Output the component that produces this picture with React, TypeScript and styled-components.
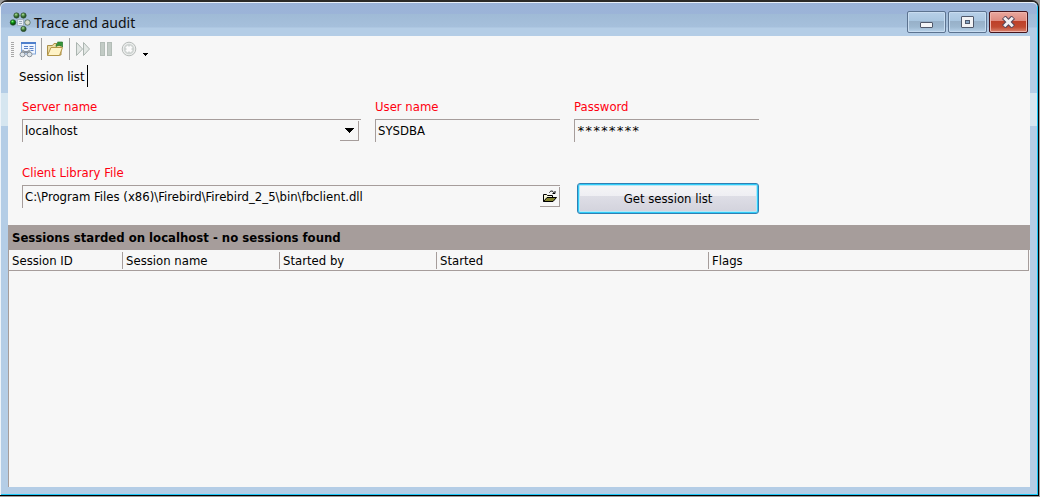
import React from "react";
import styled, { createGlobalStyle } from "styled-components";

const FONT = '"DejaVu Sans Condensed", "Noto Sans", sans-serif';
const FACE = "#f7f7f7";
const FRAME = "#b4cde6";
const LINE = "#a69d9b";

const GlobalStyle = createGlobalStyle`
  * { box-sizing: border-box; }
  body {
    margin: 0;
    background: #9c9c9c;
    font-family: ${FONT};
    font-size: 13px;
    line-height: 16px;
    color: #000;
  }
  button, input, select { font: inherit; color: inherit; }
`;

const Desktop = styled.div`
  min-height: 100vh;
  display: flex;
  padding: 0 1px 1px 0;
`;

const Window = styled.div`
  flex: 1;
  display: flex;
  flex-direction: column;
  border-style: solid;
  border-width: 2px 1px 1px 0;
  border-color: #2b2928 #000 #000 #000;
  border-radius: 7px 7px 0 0;
  background: ${FRAME};
  box-shadow: inset 1px 1px 0 #eef4fa, inset -1px -1px 0 #1cc8f8;
`;

const TitleBar = styled.header`
  display: flex;
  align-items: center;
  height: 34px;
  padding: 5px 9px 0 8px;
  margin: 0 1px 0 1px;
  border-top: 1px solid #e9eff8;
  border-radius: 5px 5px 0 0;
  background: linear-gradient(
    #9ab2d8 0, #9cb4d8 11px, #9fbad6 11px, #a6c0dc 24px, ${FRAME} 25px
  );
`;

const Title = styled.h1`
  flex: 1;
  margin: 0 0 0 3px;
  padding-top: 2px;
  font-family: "Noto Sans", sans-serif;
  font-size: 14px;
  font-weight: 400;
  line-height: 20px;
  color: #111;
`;

const CaptionButtons = styled.div`
  display: flex;
  gap: 2px;
`;

const CaptionButton = styled.button<{ $close?: boolean }>`
  display: grid;
  place-items: center;
  width: 39px;
  height: 22px;
  padding: 0;
  border: 1px solid ${(p) => (p.$close ? "#45141c" : "#5c7390")};
  border-radius: 2px;
  background: ${(p) =>
    p.$close
      ? "linear-gradient(#e9a79e, #de8a7e 45%, #bd3f28 45%, #c14a31 75%, #dc8773)"
      : "linear-gradient(#b8d0e8, #a9c6e0 45%, #97b0c8 45%, #9db8d0 75%, #b8d2ea)"};
  box-shadow: inset 0 0 0 1px ${(p) => (p.$close ? "#eeb5ac" : "#c8dcf0")};
`;

const Body = styled.main`
  flex: 1;
  display: flex;
  flex-direction: column;
  margin: 0 1px 0 1px;
  padding: 0 7px 8px;
  background: linear-gradient(
    transparent 57px, #d6e6f0 57px, #d6e6f0 90px, transparent 90px
  );
`;

const Client = styled.div`
  flex: 1;
  display: flex;
  flex-direction: column;
  background: ${FACE};
`;

const Toolbar = styled.div`
  display: flex;
  align-items: center;
  height: 26px;
  padding-left: 3px;
`;

const Grip = styled.span`
  width: 3px;
  height: 15px;
  margin-right: 2px;
  background: repeating-linear-gradient(#a8a8a8 0 1px, ${FACE} 1px 2px);
`;

const ToolButton = styled.button`
  display: grid;
  place-items: center;
  width: 23px;
  height: 22px;
  padding: 0 1px 0 0;
  border: 0;
  background: none;
`;

const MenuButton = styled(ToolButton)`
  width: 10px;
  align-items: end;
  padding-bottom: 4px;
`;

const Separator = styled.span`
  width: 1px;
  height: 22px;
  margin: 0 2px;
  background: #a0a0a0;
`;

const Tabs = styled.div`
  display: flex;
  padding: 3px 0 0 11px;
`;

const Tab = styled.button`
  height: 22px;
  padding: 1px 2px 0 0;
  border: 0;
  border-right: 1px solid #000;
  background: none;
`;

const Form = styled.form`
  display: grid;
  grid-template-columns: 339px 185px 185px;
  column-gap: 14px;
  row-gap: 23px;
  padding: 12px 14px 11px;
`;

const Field = styled.div<{ $span?: number }>`
  grid-column: span ${(p) => p.$span ?? 1};
  display: flex;
  flex-direction: column;
  gap: 4px;
`;

const Label = styled.label`
  color: #ff0010;
`;

const Control = styled.div`
  display: flex;
  height: 23px;
  position: relative;
  border-top: 1px solid ${LINE};
  border-left: 1px solid ${LINE};
`;

const Input = styled.input`
  flex: 1;
  min-width: 0;
  padding: 0 2px;
  border: 0;
  outline: 0;
  background: none;
`;

const MaskedInput = styled(Input)`
  font-family: "DejaVu Sans Mono", monospace;
`;

const Select = styled.select`
  flex: 1;
  appearance: none;
  padding: 0 2px;
  border: 0;
  outline: 0;
  background: none;
`;

const DropMark = styled.span`
  position: absolute;
  top: 1px;
  right: 2px;
  display: grid;
  place-items: center;
  width: 19px;
  height: 20px;
  border-right: 1px solid ${LINE};
  border-bottom: 1px solid ${LINE};
  pointer-events: none;
`;

const BrowseButton = styled.button`
  display: grid;
  place-items: center;
  width: 20px;
  height: 20px;
  margin-top: 1px;
  padding: 0;
  border: 0;
  border-right: 1px solid ${LINE};
  border-bottom: 1px solid ${LINE};
  background: none;
`;

const SubmitButton = styled.button`
  height: 31px;
  margin: 18px 0 0 3px;
  border: 1px solid #3080b4;
  border-radius: 3px;
  background: linear-gradient(#f6f6f7 0, #efeff3 40%, #dedee6 41%, #d2d2dc 100%);
  box-shadow: inset 0 0 0 1px #30ccf8, inset 0 0 0 2px #b4e8f8;
`;

const Band = styled.h2`
  margin: 0;
  padding: 5px 4px 4px;
  background: ${LINE};
  font-size: 13px;
  font-weight: 700;
  line-height: 16px;
`;

const List = styled.section`
  flex: 1;
  margin-right: 1px;
  border-left: 1px solid ${LINE};
`;

const Table = styled.table`
  width: 100%;
  table-layout: fixed;
  border-collapse: separate;
  border-spacing: 0;
  border-right: 1px solid ${LINE};
`;

const HeadCell = styled.th<{ $width?: number }>`
  width: ${(p) => (p.$width ? `${p.$width}px` : "auto")};
  height: 21px;
  padding: 3px 3px 1px;
  border-bottom: 1px solid ${LINE};
  background: ${(p) =>
    p.$width ? `linear-gradient(${LINE}, ${LINE}) right 2px / 1px 17px no-repeat` : "none"};
  font-weight: 400;
  line-height: 16px;
  text-align: left;
`;

const AppIcon = () => (
  <svg width="22" height="20" viewBox="0 0 22 20">
    <defs>
      <radialGradient id="leaf" cx="40%" cy="30%">
        <stop offset="0" stopColor="#b8e0a8" />
        <stop offset="0.5" stopColor="#5c9c50" />
        <stop offset="1" stopColor="#2c5a2a" />
      </radialGradient>
      <radialGradient id="bright" cx="40%" cy="30%">
        <stop offset="0" stopColor="#90f080" />
        <stop offset="0.5" stopColor="#10a018" />
        <stop offset="1" stopColor="#045008" />
      </radialGradient>
    </defs>
    <g stroke="#2c4a30" strokeWidth="0.6">
      <circle cx="7.500" cy="3.5" r="2.7" fill="url(#leaf)" />
      <circle cx="14.500" cy="3.5" r="2.7" fill="url(#leaf)" />
      <circle cx="4" cy="10.5" r="2.8" fill="url(#bright)" />
      <circle cx="18.500" cy="10.5" r="2.7" fill="#d6dccb" />
      <circle cx="14.500" cy="17" r="2.7" fill="url(#leaf)" />
    </g>
    <rect x="8.500" y="7.500" width="6" height="6" fill="#e6edf5" stroke="#a3b2c2" />
    <path d="M10 9.500h3M10 11.500h3" stroke="#9aa9b8" />
  </svg>
);

const SessionsIcon = () => (
  <svg width="17" height="17" viewBox="0 0 17 17">
    <rect x="2.500" y="2" width="14" height="11" fill="#f0f6ff" stroke="#82a8dc" />
    <path d="M2 2h15" stroke="#4f80cc" strokeWidth="2" />
    <path d="M5 5.500h4M10.500 5.500h4M5 7.500h4M10.500 7.500h4M11.500 9.500h3" stroke="#5c82c6" />
    <path d="M4.500 9L2.500 13M9.500 9L11.500 13" stroke="#98a0a8" strokeWidth="2" />
    <ellipse cx="3.500" cy="13.500" rx="2.500" ry="2.300" fill="#dfe5ea" stroke="#8a939c" />
    <ellipse cx="10.500" cy="13.500" rx="2.500" ry="2.300" fill="#dfe5ea" stroke="#8a939c" />
    <path d="M5 11h4" stroke="#8a939c" strokeWidth="2" />
  </svg>
);

const OpenIcon = () => (
  <svg width="18" height="16" viewBox="0 0 18 16">
    <path d="M1.500 14V4.500h5l1.500-2h3v2h4V14z" fill="#eddca3" stroke="#ab8f48" />
    <path d="M1.500 14.500L5 6.500h11.500L13.500 14.500z" fill="#fff3c6" stroke="#b49647" />
    <path d="M10 5.500c0-2.500 1-3 2-3L11.500 1h5v5L15 4.500c-2-.5-3.500 0-5 1z" fill="#36963a" stroke="#28752b" strokeWidth="0.700" />
  </svg>
);

const PlayIcon = () => (
  <svg width="16" height="16" viewBox="0 0 16 16">
    <g fill="#e2e7e4" stroke="#abb5b0" strokeLinejoin="round">
      <path d="M1.500 1.500v13l6-6.500z" />
      <path d="M8.500 1.500v13l6-6.500z" />
    </g>
  </svg>
);

const PauseIcon = () => (
  <svg width="14" height="15" viewBox="0 0 14 15">
    <g fill="#c2cbc5" stroke="#b3bdb7">
      <rect x="1.500" y="0.500" width="4" height="13" />
      <rect x="8.500" y="0.500" width="4" height="13" />
    </g>
  </svg>
);

const StopIcon = () => (
  <svg width="16" height="16" viewBox="0 0 16 16">
    <circle cx="8" cy="8" r="6.800" fill="#eceeed" stroke="#b6bbb9" />
    <circle cx="8" cy="8" r="5.200" fill="#cfd4d2" />
    <path d="M5.500 5.500l5 5M10.500 5.500l-5 5" stroke="#fbfbfb" strokeWidth="3" />
  </svg>
);

const DownMark = ({ width }: { width: number }) => (
  <svg width={width} height={(width + 1) / 2} viewBox="0 0 9 5" shapeRendering="crispEdges">
    <path d="M0 0h9v1h-1v1h-1v1h-1v1h-1v1h-1v-1h-1v-1h-1v-1h-1v-1h-1z" />
  </svg>
);

const BrowseIcon = () => (
  <svg width="14" height="13" viewBox="0 0 14 13">
    <path d="M6.500 2.500c1-2 3.500-2 4.500.5M12 1v2.500H9.500" fill="none" stroke="#000" />
    <path d="M.5 11.500V4.500h3l1 1h5v2" fill="#f7f7dc" stroke="#000" />
    <path d="M.5 11.500l3.500-4h9.500l-3.500 4z" fill="#848430" stroke="#000" />
  </svg>
);

const MinimizeIcon = () => (
  <svg width="15" height="14" viewBox="0 0 15 14">
    <rect x="1.500" y="7.500" width="12" height="5" rx="0.500" fill="#f4f5f7" stroke="#50586a" />
  </svg>
);

const MaximizeIcon = () => (
  <svg width="15" height="14" viewBox="0 0 15 14">
    <rect x="1.500" y="1.500" width="12" height="11" rx="0.500" fill="#f2f3f5" stroke="#50586a" />
    <rect x="5.500" y="5.500" width="4" height="3" fill="#86a5c4" stroke="#50586a" />
  </svg>
);

const CloseIcon = () => (
  <svg width="15" height="12" viewBox="0 0 15 12" fill="none" strokeLinecap="square">
    <path d="M4.500 3l6 6M10.500 3l-6 6" stroke="#54465a" strokeWidth="5" />
    <path d="M4.300 2.800l6.400 6.400M10.700 2.800l-6.400 6.400" stroke="#f3f0f2" strokeWidth="3" />
  </svg>
);

const columns = [
  { name: "Session ID", width: 114 },
  { name: "Session name", width: 157 },
  { name: "Started by", width: 157 },
  { name: "Started", width: 272 },
  { name: "Flags" },
];

export default function App() {
  return (
    <>
      <GlobalStyle />
      <Desktop>
        <Window>
          <TitleBar>
            <AppIcon />
            <Title>Trace and audit</Title>
            <CaptionButtons>
              <CaptionButton aria-label="Minimize"><MinimizeIcon /></CaptionButton>
              <CaptionButton aria-label="Maximize"><MaximizeIcon /></CaptionButton>
              <CaptionButton aria-label="Close" $close><CloseIcon /></CaptionButton>
            </CaptionButtons>
          </TitleBar>
          <Body>
            <Client>
              <Toolbar role="toolbar">
                <Grip />
                <ToolButton aria-label="Sessions"><SessionsIcon /></ToolButton>
                <Separator />
                <ToolButton aria-label="Open"><OpenIcon /></ToolButton>
                <Separator />
                <ToolButton aria-label="Resume" disabled><PlayIcon /></ToolButton>
                <ToolButton aria-label="Pause" disabled><PauseIcon /></ToolButton>
                <ToolButton aria-label="Stop" disabled><StopIcon /></ToolButton>
                <MenuButton aria-label="More"><DownMark width={5} /></MenuButton>
              </Toolbar>
              <Tabs role="tablist">
                <Tab role="tab" aria-selected>Session list</Tab>
              </Tabs>
              <Form onSubmit={(e) => e.preventDefault()}>
                <Field>
                  <Label htmlFor="server">Server name</Label>
                  <Control>
                    <Select id="server"><option>localhost</option></Select>
                    <DropMark><DownMark width={9} /></DropMark>
                  </Control>
                </Field>
                <Field>
                  <Label htmlFor="user">User name</Label>
                  <Control><Input id="user" defaultValue="SYSDBA" /></Control>
                </Field>
                <Field>
                  <Label htmlFor="password">Password</Label>
                  <Control><MaskedInput id="password" defaultValue="********" /></Control>
                </Field>
                <Field $span={2}>
                  <Label htmlFor="library">Client Library File</Label>
                  <Control>
                    <Input
                      id="library"
                      defaultValue={"C:\\Program Files (x86)\\Firebird\\Firebird_2_5\\bin\\fbclient.dll"}
                    />
                    <BrowseButton type="button" aria-label="Browse"><BrowseIcon /></BrowseButton>
                  </Control>
                </Field>
                <SubmitButton type="submit">Get session list</SubmitButton>
              </Form>
              <Band>Sessions starded on localhost - no sessions found</Band>
              <List>
                <Table>
                  <thead>
                    <tr>
                      {columns.map((c) => (
                        <HeadCell key={c.name} $width={c.width} scope="col">{c.name}</HeadCell>
                      ))}
                    </tr>
                  </thead>
                </Table>
              </List>
            </Client>
          </Body>
        </Window>
      </Desktop>
    </>
  );
}
